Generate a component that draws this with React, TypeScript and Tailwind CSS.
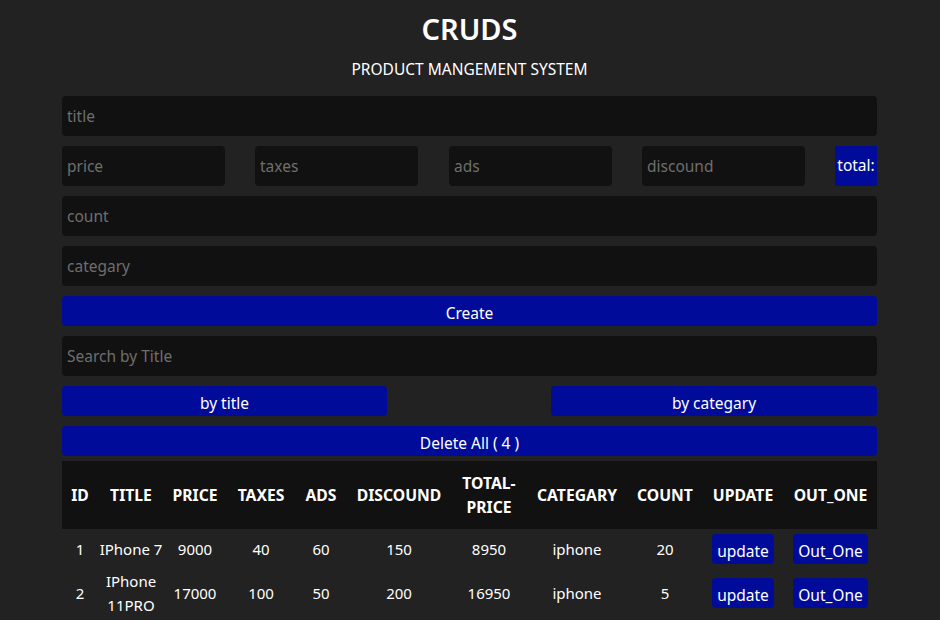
import React from 'react';

const products = [
  { id: 1, title: 'IPhone 7', price: 9000, taxes: 40, ads: 60, discount: 150, total: 8950, category: 'iphone', count: 20 },
  { id: 2, title: 'IPhone 11PRO', price: 17000, taxes: 100, ads: 50, discount: 200, total: 16950, category: 'iphone', count: 5 },
];

const heads = ['ID', 'TITLE', 'PRICE', 'TAXES', 'ADS', 'DISCOUND', 'TOTAL-PRICE', 'CATEGARY', 'COUNT', 'UPDATE', 'OUT_ONE'];
const widths = ['w-[36px]', 'w-[66px]', 'w-[62px]', 'w-[70px]', 'w-[50px]', 'w-[106px]', 'w-[74px]', 'w-[102px]', 'w-[74px]', 'w-[82px]', 'w-[93px]'];

const inputCls =
  'h-10 w-full rounded bg-[#111111] px-[5px] text-[15.5px] text-white outline-none placeholder:text-[#6e6e6e]';
const btnCls = 'w-full rounded bg-[#000c99] pt-[5px] text-[15.5px] text-white';

function Field({ ph }: { ph: string }) {
  return <input className={inputCls} placeholder={ph} />;
}

export default function App() {
  return (
    <div
      className="min-h-screen bg-[#222222] text-white"
      style={{ fontFamily: '"Noto Sans", "Open Sans", sans-serif' }}
    >
      <div className="ml-[62px] w-[815px]">
        <div className="pt-[10px] text-center">
          <h1 className="text-[29px] font-semibold leading-[38px]">CRUDS</h1>
          <p className="mt-[11px] text-[15.5px] leading-5">PRODUCT MANGEMENT SYSTEM</p>
        </div>

        <div className="mt-[17px] flex flex-col gap-[10px]">
          <Field ph="title" />
          <div className="flex items-center">
            <div className="w-[163px]"><Field ph="price" /></div>
            <div className="ml-[30px] w-[163px]"><Field ph="taxes" /></div>
            <div className="ml-[31px] w-[163px]"><Field ph="ads" /></div>
            <div className="ml-[30px] w-[163px]"><Field ph="discound" /></div>
            <div className="ml-auto flex h-10 w-[42px] items-center justify-center bg-[#000c99] text-[15.5px]">
              total:
            </div>
          </div>
          <Field ph="count" />
          <Field ph="categary" />
          <button className={btnCls + ' h-[30px]'}>Create</button>
          <Field ph="Search by Title" />
          <div className="flex justify-between">
            <button className="h-[30px] w-[325px] rounded bg-[#000c99] pt-[5px] text-[15.5px] text-white">by title</button>
            <button className="h-[30px] w-[326px] rounded bg-[#000c99] pt-[5px] text-[15.5px] text-white">by categary</button>
          </div>
          <button className={btnCls + ' h-[30px]'}>Delete All ( 4 )</button>
        </div>

        <table className="mt-[5px] w-full table-fixed border-collapse text-center text-[15px]">
          <thead>
            <tr className="bg-[#111111]">
              {heads.map((h, i) => (
                <th key={h} className={widths[i] + ' px-0 py-[10px] text-[15.7px] font-bold leading-6'}>
                  {h === 'TOTAL-PRICE' ? (
                    <>
                      TOTAL-
                      <br />
                      PRICE
                    </>
                  ) : (
                    h
                  )}
                </th>
              ))}
            </tr>
          </thead>
          <tbody>
            {products.map((p) => (
              <tr key={p.id} className="leading-6">
                <td>{p.id}</td>
                <td>{p.title}</td>
                <td>{p.price}</td>
                <td>{p.taxes}</td>
                <td>{p.ads}</td>
                <td>{p.discount}</td>
                <td>{p.total}</td>
                <td>{p.category}</td>
                <td>{p.count}</td>
                <td>
                  <button className="my-[5px] h-[30px] rounded bg-[#000c99] px-[5px] pt-[3px] text-[15.5px] text-white">
                    update
                  </button>
                </td>
                <td>
                  <button className="my-[5px] h-[30px] rounded bg-[#000c99] px-[5px] pt-[3px] text-[15.5px] text-white">
                    Out_One
                  </button>
                </td>
              </tr>
            ))}
          </tbody>
        </table>
      </div>
    </div>
  );
}
